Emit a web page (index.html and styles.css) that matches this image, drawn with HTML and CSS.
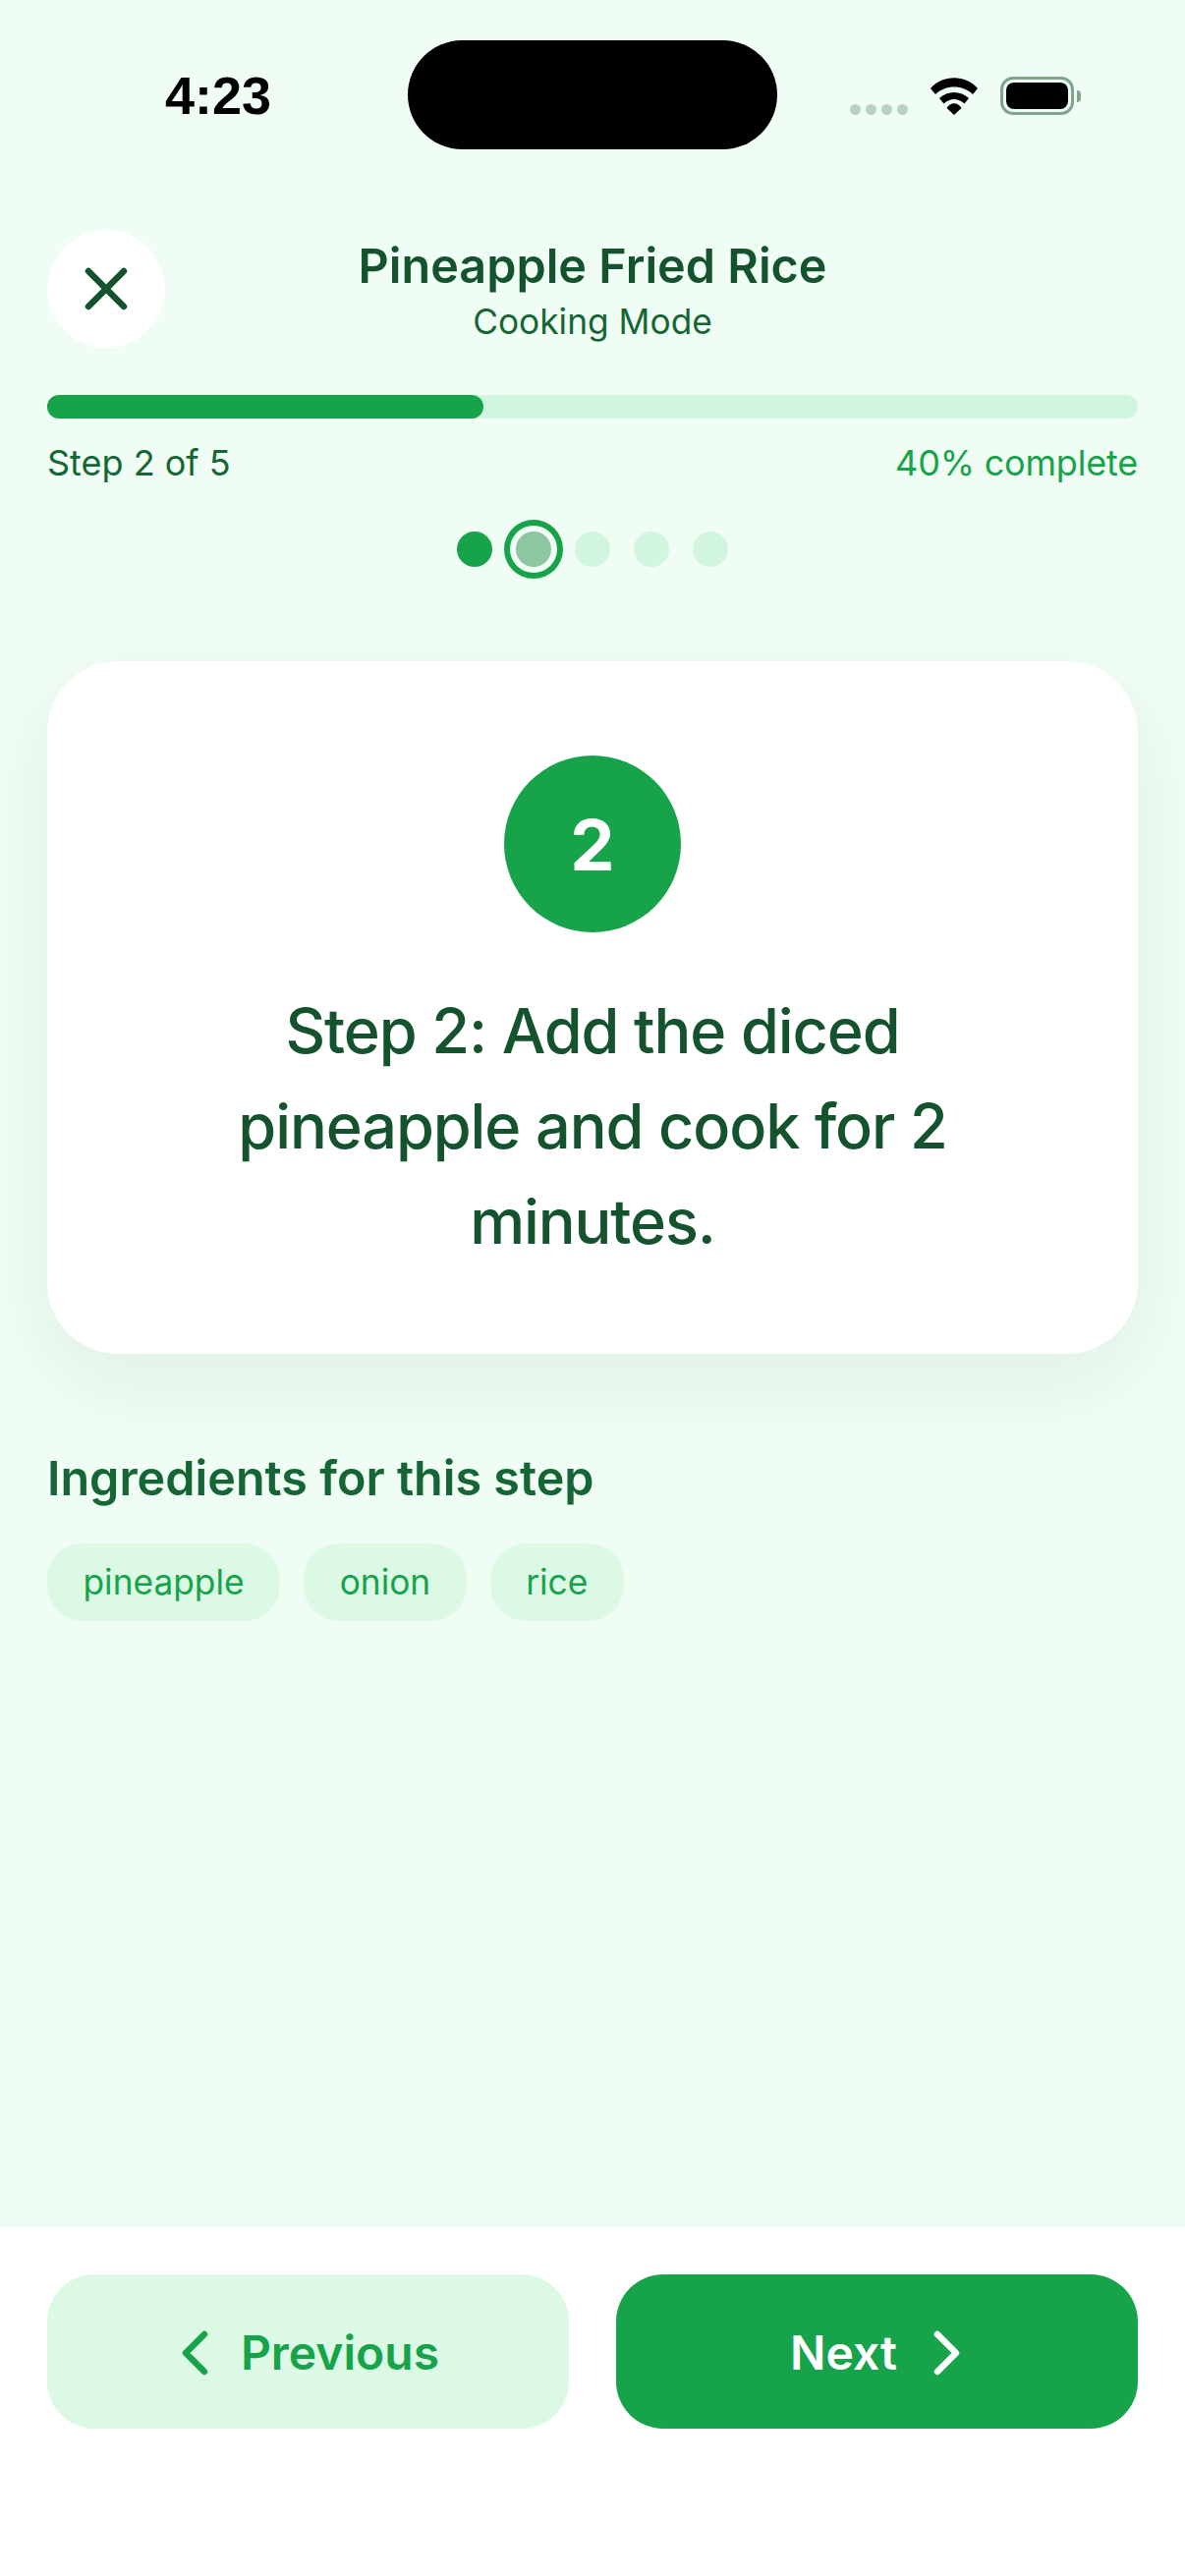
FILE: index.html
```html
<!DOCTYPE html>
<html lang="en">
<head>
    <meta charset="UTF-8">
    <meta name="viewport" content="width=device-width, initial-scale=1.0">
    <title>Cooking Mode</title>
    <link rel="stylesheet" href="styles.css">
</head>
<body>
    <div class="screen">
        <div class="status-bar">
            <div class="time">4:23</div>
            <div class="island"></div>
            <div class="status-icons">
                <div class="signal">
                    <span></span><span></span><span></span><span></span>
                </div>
                <svg class="wifi" width="50" height="38" viewBox="0 0 50 38" fill="#000">
                    <path d="M1 11 C13 -3.500 37 -3.500 49 11 L44 17 C34 7 16 7 6 17 Z"/>
                    <path d="M10 21 C18 13 32 13 40 21 L35.500 26.500 C29 20.500 21 20.500 14.500 26.500 Z"/>
                    <path d="M17.500 31 C21 24.500 29 24.500 32.500 31 L25 38 Z"/>
                </svg>
                <div class="battery">
                    <div class="battery-body"><div class="battery-level"></div></div>
                    <div class="battery-cap"></div>
                </div>
            </div>
        </div>

        <div class="header">
            <div class="close-btn">
                <svg width="60" height="60" viewBox="0 0 60 60" fill="none" stroke="#14532d" stroke-width="6.500" stroke-linecap="round">
                    <path d="M12 12 L48 48"/>
                    <path d="M48 12 L12 48"/>
                </svg>
            </div>
            <div class="title-wrap">
                <div class="title">Pineapple Fried Rice</div>
                <div class="subtitle">Cooking Mode</div>
            </div>
        </div>

        <div class="progress">
            <div class="progress-track">
                <div class="progress-fill" style="width: 40%"></div>
            </div>
            <div class="progress-labels">
                <span class="step-label">Step 2 of 5</span>
                <span class="percent-label">40% complete</span>
            </div>
        </div>

        <div class="dots">
            <div class="dot done"></div>
            <div class="dot current"></div>
            <div class="dot"></div>
            <div class="dot"></div>
            <div class="dot"></div>
        </div>

        <div class="card">
            <div class="step-number">2</div>
            <div class="step-text">Step 2: Add the diced pineapple and cook for 2 minutes.</div>
        </div>

        <div class="ingredients">
            <div class="ingredients-title">Ingredients for this step</div>
            <div class="chips">
                <span class="chip">pineapple</span>
                <span class="chip">onion</span>
                <span class="chip">rice</span>
            </div>
        </div>

        <div class="footer">
            <div class="nav-btn prev">
                <svg width="36" height="48" viewBox="0 0 36 48" fill="none" stroke="currentColor" stroke-width="6.500" stroke-linecap="round" stroke-linejoin="round">
                    <path d="M28 5 L9 24 L28 43"/>
                </svg>
                <span>Previous</span>
            </div>
            <div class="nav-btn next">
                <span>Next</span>
                <svg width="36" height="48" viewBox="0 0 36 48" fill="none" stroke="currentColor" stroke-width="6.500" stroke-linecap="round" stroke-linejoin="round">
                    <path d="M9 5 L28 24 L9 43"/>
                </svg>
            </div>
        </div>
    </div>
</body>
</html>
```

FILE: styles.css
```css
* {
    margin: 0;
    padding: 0;
    box-sizing: border-box;
}
html, body {
    width: 100%;
    height: 100%;
    overflow: hidden;
}
body {
    font-family: Inter, "Noto Sans", sans-serif;
    background-color: #f0fdf4;
    color: #14532d;
}
.screen {
    height: 2622px;
    display: flex;
    flex-direction: column;
}
.status-bar {
    height: 234px;
    padding: 41px 0 0 0;
    display: grid;
    grid-template-columns: 415px 376px 415px;
    align-items: start;
}
.time {
    font-family: "Liberation Sans", sans-serif;
    font-size: 54px;
    font-weight: 700;
    color: #000;
    text-align: right;
    padding: 27px 139px 0 0;
    line-height: 58px;
}
.island {
    height: 111px;
    background-color: #000;
    border-radius: 56px;
}
.status-icons {
    display: flex;
    align-items: center;
    padding: 37px 0 0 74px;
}
.signal {
    display: flex;
    gap: 5px;
    margin: 27px 22px 0 0;
}
.signal span {
    width: 11px;
    height: 11px;
    border-radius: 50%;
    background-color: #b5d2bf;
}
.wifi {
    margin-right: 22px;
}
.battery {
    display: flex;
    align-items: center;
    gap: 3px;
}
.battery-body {
    width: 75px;
    height: 39px;
    padding: 3px;
    border: 3px solid #7fa58d;
    border-radius: 13px;
}
.battery-level {
    height: 100%;
    background-color: #000;
    border-radius: 8px;
}
.battery-cap {
    width: 4px;
    height: 12px;
    background-color: #7fa58d;
    border-radius: 0 6px 6px 0;
}
.header {
    padding: 0 48px;
    display: grid;
    grid-template-columns: 120px 1fr 120px;
    align-items: center;
}
.close-btn {
    width: 120px;
    height: 120px;
    background-color: #fff;
    border-radius: 50%;
    display: flex;
    align-items: center;
    justify-content: center;
}
.title-wrap {
    padding-top: 2px;
    text-align: center;
}
.title {
    font-size: 48.500px;
    font-weight: 600;
    line-height: 66px;
}
.subtitle {
    font-size: 35.300px;
    line-height: 48px;
    color: #166534;
}
.progress {
    padding: 48px 48px 0;
}
.progress-track {
    height: 24px;
    background-color: #d1f5de;
    border-radius: 12px;
}
.progress-fill {
    height: 100%;
    background-color: #16a34a;
    border-radius: 12px;
}
.progress-labels {
    display: flex;
    justify-content: space-between;
    align-items: baseline;
    margin-top: 23px;
    font-size: 36px;
    line-height: 44px;
}
.step-label {
    color: #166534;
}
.percent-label {
    color: #16a34a;
    letter-spacing: -0.200px;
}
.dots {
    display: flex;
    justify-content: center;
    gap: 24px;
    padding-top: 48px;
}
.dot {
    width: 36px;
    height: 36px;
    border-radius: 50%;
    background-color: #d1f5de;
}
.dot.done {
    background-color: #16a34a;
}
.dot.current {
    background-color: #8dc7a2;
    box-shadow: 0 0 0 6px #f0fdf4, 0 0 0 12px #16a34a;
}
.card {
    margin: 96px 48px 0;
    padding: 96px 144px 72px;
    height: 705px;
    background-color: #fff;
    border-radius: 72px;
    box-shadow: 0 30px 90px rgba(20, 83, 45, 0.08);
    text-align: center;
}
.step-number {
    width: 180px;
    height: 180px;
    margin: 0 auto 52px;
    background-color: #16a34a;
    color: #fff;
    border-radius: 50%;
    display: flex;
    align-items: center;
    justify-content: center;
    font-size: 72px;
    font-weight: 700;
}
.step-text {
    font-size: 63px;
    font-weight: 500;
    letter-spacing: -1.100px;
    line-height: 97px;
}
.ingredients {
    padding: 94px 48px 0;
    flex: 1;
}
.ingredients-title {
    font-size: 48.500px;
    font-weight: 600;
    line-height: 66px;
    color: #166534;
}
.chips {
    display: flex;
    gap: 24px;
    margin-top: 33px;
}
.chip {
    height: 79px;
    padding: 0 36.500px;
    background-color: #dcf9e6;
    color: #16a34a;
    border-radius: 36px;
    font-size: 35.300px;
    line-height: 79px;
}
.footer {
    height: 355px;
    padding: 48px 48px 0;
    background-color: #fff;
    display: grid;
    grid-template-columns: 1fr 1fr;
    gap: 48px;
    align-items: start;
}
.nav-btn {
    height: 157px;
    padding-top: 2px;
    border-radius: 48px;
    display: flex;
    align-items: center;
    justify-content: center;
    gap: 32px;
    font-size: 48px;
    font-weight: 600;
}
.nav-btn.prev {
    background-color: #dcf9e6;
    color: #16a34a;
    gap: 29px;
}
.nav-btn.next {
    background-color: #16a34a;
    color: #fff;
}
```
